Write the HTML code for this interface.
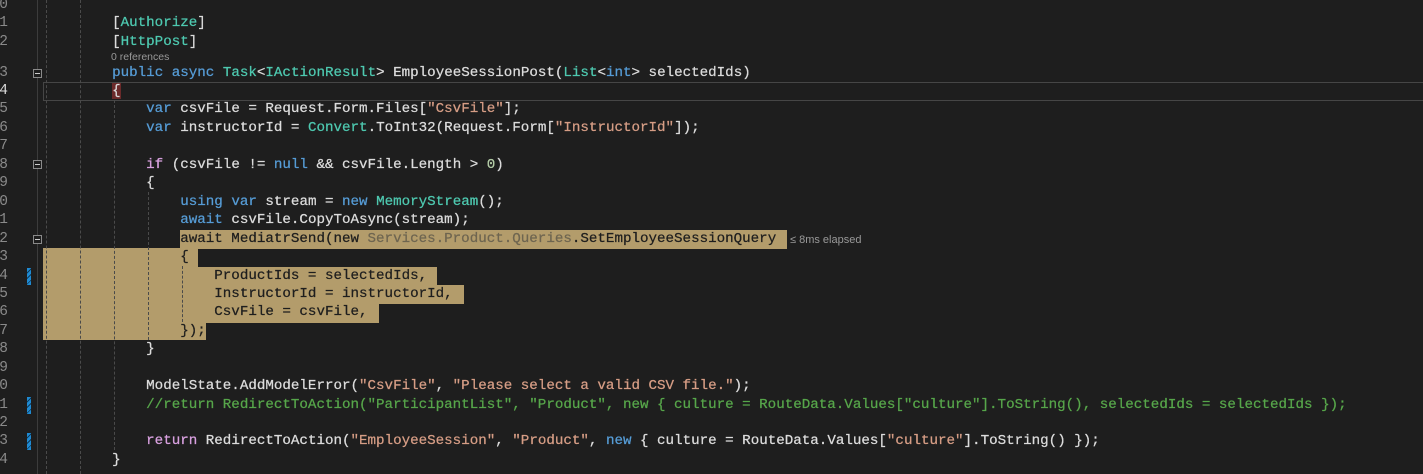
<!DOCTYPE html>
<html><head><meta charset="utf-8"><style>
body{margin:0;width:1423px;height:474px;background:#1e1e1e;overflow:hidden;position:relative;font-family:"Liberation Mono",monospace;}
.l{position:absolute;left:44px;height:18.4px;line-height:18.4px;font-size:14.2px;white-space:pre;color:#dcdcdc;-webkit-text-stroke:0.25px currentColor;}
.n{position:absolute;left:-4px;width:12px;text-align:right;font-size:14.5px;line-height:18.4px;color:#8a8a8a;font-family:"Liberation Mono",monospace;}
.k{color:#569cd6}.t{color:#4ec9b0}.s{color:#d69d85}.c{color:#57a64a}.p{color:#d8a0df}.m{color:#b5cea8}.v{color:#9cdcfe}.y{color:#dcdcaa}
.sel{position:absolute;background:#b39c6b;}
.g{position:absolute;width:0;border-left:1px dashed #4a4a4a;}
.d{color:#1e1e1e}.dg{color:#6e6550}
.fold{position:absolute;left:33px;width:7px;height:7px;border:1px solid #8a8a8a;background:#1e1e1e;}
.fold:after{content:"";position:absolute;left:1px;top:3px;width:5px;height:1px;background:#ccc;}
.chg{position:absolute;left:27px;width:4px;background:repeating-linear-gradient(135deg,#1f8ad2 0 3px,#0d3a5a 3px 4px);}
</style></head><body>
<div style="position:absolute;left:37px;top:0;width:1px;height:474px;background:#3c3c3c"></div>
<div style="position:absolute;left:43px;top:82px;width:1390px;height:17px;border:1px solid #464646"></div>

<div class="sel" style="left:180px;top:230px;width:607px;height:19px"></div>
<div class="sel" style="left:43px;top:248px;width:155px;height:20px"></div>
<div class="sel" style="left:43px;top:267px;width:394px;height:19px"></div>
<div class="sel" style="left:43px;top:285px;width:421px;height:19px"></div>
<div class="sel" style="left:43px;top:303px;width:336px;height:20px"></div>
<div class="sel" style="left:43px;top:321px;width:163px;height:19.4px"></div>

<div class="g" style="left:46px;top:0;height:474px"></div>
<div class="g" style="left:80px;top:0;height:474px"></div>
<div class="g" style="left:114px;top:100px;height:350px"></div>
<div class="g" style="left:148px;top:192px;height:148px"></div>
<div class="g" style="left:182px;top:266px;height:56px"></div>

<div class="fold" style="top:69px"></div>
<div class="fold" style="top:160px"></div>
<div class="fold" style="top:235px"></div>
<div class="chg" style="top:268px;height:17px"></div>
<div class="chg" style="top:397px;height:17px"></div>
<div class="chg" style="top:433px;height:17px"></div>

<div class="n" style="top:-4px">0</div>
<div class="n" style="top:14px">1</div>
<div class="n" style="top:33px">2</div>
<div class="n" style="top:64px">3</div>
<div class="n" style="top:82px;color:#dcdcdc">4</div>
<div class="n" style="top:100px">5</div>
<div class="n" style="top:119px">6</div>
<div class="n" style="top:137px">7</div>
<div class="n" style="top:156px">8</div>
<div class="n" style="top:174px">9</div>
<div class="n" style="top:193px">0</div>
<div class="n" style="top:211px">1</div>
<div class="n" style="top:230px">2</div>
<div class="n" style="top:248px">3</div>
<div class="n" style="top:267px">4</div>
<div class="n" style="top:285px">5</div>
<div class="n" style="top:303px">6</div>
<div class="n" style="top:322px">7</div>
<div class="n" style="top:340px">8</div>
<div class="n" style="top:359px">9</div>
<div class="n" style="top:377px">0</div>
<div class="n" style="top:396px">1</div>
<div class="n" style="top:414px">2</div>
<div class="n" style="top:432px">3</div>
<div class="n" style="top:451px">4</div>

<div class="l" style="top:14px">        [<span class="t">Authorize</span>]</div>
<div class="l" style="top:33px">        [<span class="t">HttpPost</span>]</div>
<div style="position:absolute;left:111px;top:51px;font:10.5px 'Liberation Sans',sans-serif;color:#999">0 references</div>
<div class="l" style="top:64px">        <span class="k">public</span> <span class="k">async</span> <span class="t">Task</span>&lt;<span class="t">IActionResult</span>&gt; EmployeeSessionPost(<span class="t">List</span>&lt;<span class="k">int</span>&gt; selectedIds)</div>
<div class="l" style="top:82px">        <span style="background:#6b2a2a">{</span></div>
<div class="l" style="top:100px">            <span class="k">var</span> csvFile = Request.Form.Files[<span class="s">"CsvFile"</span>];</div>
<div class="l" style="top:119px">            <span class="k">var</span> instructorId = <span class="t">Convert</span>.ToInt32(Request.Form[<span class="s">"InstructorId"</span>]);</div>
<div class="l" style="top:156px">            <span class="p">if</span> (csvFile != <span class="k">null</span> &amp;&amp; csvFile.Length &gt; <span class="m">0</span>)</div>
<div class="l" style="top:174px">            {</div>
<div class="l" style="top:193px">                <span class="k">using</span> <span class="k">var</span> stream = <span class="k">new</span> <span class="t">MemoryStream</span>();</div>
<div class="l" style="top:211px">                <span class="k">await</span> csvFile.CopyToAsync(stream);</div>
<div class="l d" style="top:230px">                await MediatrSend(new <span class="dg">Services.Product.Queries</span>.SetEmployeeSessionQuery</div>
<div style="position:absolute;left:790px;top:234px;font:11px 'Liberation Sans',sans-serif;color:#999">≤ 8ms elapsed</div>
<div class="l d" style="top:248px">                {</div>
<div class="l d" style="top:267px">                    ProductIds = selectedIds,</div>
<div class="l d" style="top:285px">                    InstructorId = instructorId,</div>
<div class="l d" style="top:303px">                    CsvFile = csvFile,</div>
<div class="l d" style="top:322px">                });</div>
<div class="l" style="top:340px">            }</div>
<div class="l" style="top:377px">            ModelState.AddModelError(<span class="s">"CsvFile"</span>, <span class="s">"Please select a valid CSV file."</span>);</div>
<div class="l c" style="top:396px">            //return RedirectToAction("ParticipantList", "Product", new { culture = RouteData.Values["culture"].ToString(), selectedIds = selectedIds });</div>
<div class="l" style="top:432px">            <span class="p">return</span> RedirectToAction(<span class="s">"EmployeeSession"</span>, <span class="s">"Product"</span>, <span class="k">new</span> { culture = RouteData.Values[<span class="s">"culture"</span>].ToString() });</div>
<div class="l" style="top:451px">        }</div>
</body></html>
